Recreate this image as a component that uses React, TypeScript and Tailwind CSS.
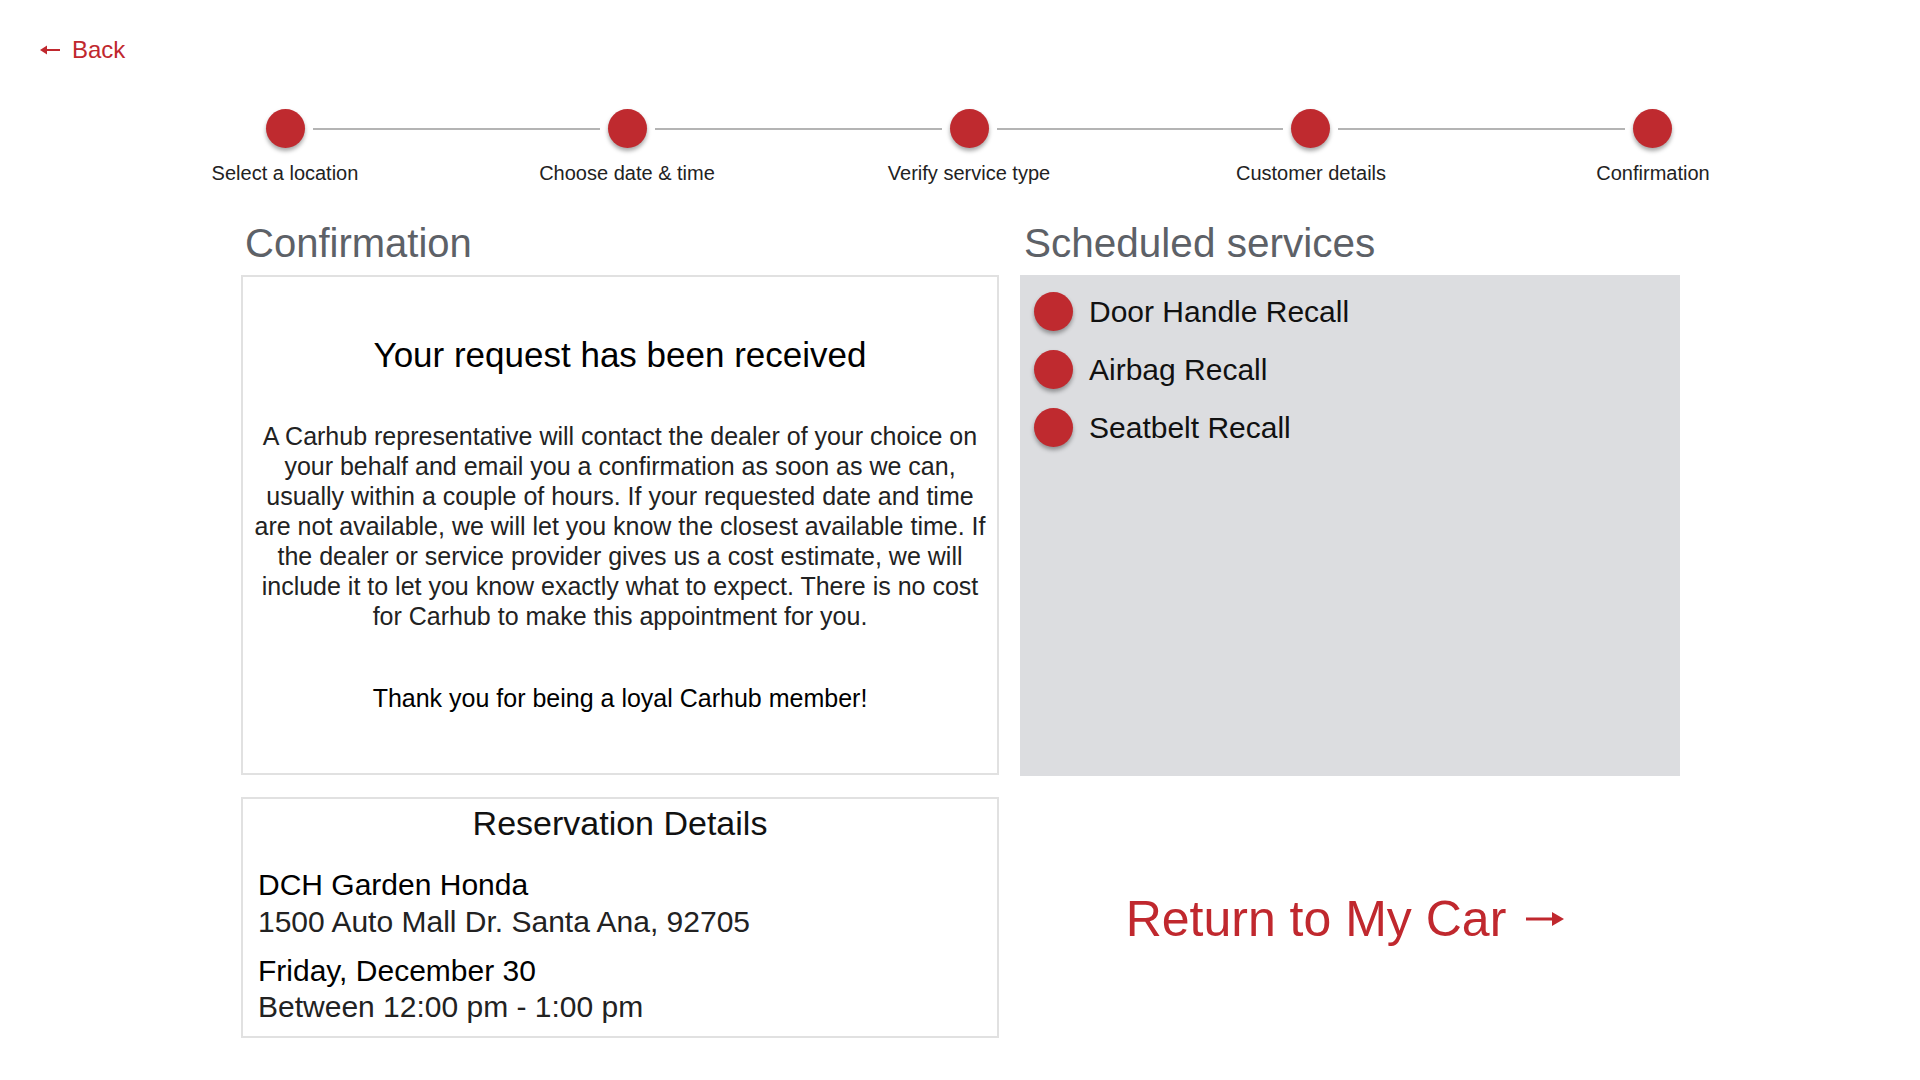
import React from 'react';

const RED = '#c0282e';

const steps = ['Select a location', 'Choose date & time', 'Verify service type', 'Customer details', 'Confirmation'];
const services = ['Door Handle Recall', 'Airbag Recall', 'Seatbelt Recall'];
const message = [
  'A Carhub representative will contact the dealer of your choice on',
  'your behalf and email you a confirmation as soon as we can,',
  'usually within a couple of hours. If your requested date and time',
  'are not available, we will let you know the closest available time. If',
  'the dealer or service provider gives us a cost estimate, we will',
  'include it to let you know exactly what to expect. There is no cost',
  'for Carhub to make this appointment for you.',
];

function Dot() {
  return <span className="block w-[39px] h-[39px] shrink-0 rounded-full bg-[#bf2a2f] shadow-[0_3px_4px_rgba(0,0,0,0.35)]" />;
}

function ArrowLeft() {
  return (
    <svg width="20" height="12" viewBox="0 0 20 12" fill={RED}>
      <polygon points="0,6 7,1.5 7,10.5" />
      <rect x="6" y="5" width="14" height="2" />
    </svg>
  );
}

function ArrowRight() {
  return (
    <svg width="38" height="16" viewBox="0 0 38 16" fill={RED}>
      <rect x="0" y="6.5" width="28" height="3" />
      <polygon points="26,1 38,8 26,15" />
    </svg>
  );
}

export default function App() {
  return (
    <div className="w-[1920px] h-[1080px] bg-white overflow-hidden font-['Liberation_Sans',Arial,sans-serif] text-[#1a1a1a]">
      {/* back link */}
      <div className="mt-[36px] ml-[40px] flex items-center gap-[12px] h-[28px] text-[24px] leading-[28px]" style={{ color: RED }}>
        <ArrowLeft />
        <span>Back</span>
      </div>

      {/* progress */}
      <div className="ml-[114px] w-[1710px] mt-[45px]">
        <div className="flex items-center px-[152px]">
          {steps.map((s, i) => (
            <React.Fragment key={s}>
              {i > 0 && <span className="flex-1 h-[2px] mx-[8px] bg-[#b4b4b4]" />}
              <Dot />
            </React.Fragment>
          ))}
        </div>
        <div className="grid grid-cols-5 mt-[13px] text-[20px] leading-[24px] text-[#222] text-center">
          {steps.map((s) => (
            <div key={s}>{s}</div>
          ))}
        </div>
      </div>

      <div className="flex gap-[21px] ml-[241px] mt-[34px]">
        {/* left column */}
        <div className="w-[758px]">
          <h2 className="pl-[4px] text-[40px] leading-[48px] text-[#5d6167]">Confirmation</h2>
          <div className="mt-[8px] h-[500px] border-2 border-[#e1e1e1] flex flex-col items-center text-center">
            <div className="mt-[58px] text-[35px] leading-[40px] text-black">Your request has been received</div>
            <div className="mt-[46px] text-[25px] leading-[30px] text-[#222]">
              {message.map((l) => (
                <div key={l} className="whitespace-nowrap">{l}</div>
              ))}
            </div>
            <div className="mt-[52px] text-[25px] leading-[30px] text-black">Thank you for being a loyal Carhub member!</div>
          </div>

          <div className="mt-[22px] h-[241px] border-2 border-[#e1e1e1] pl-[15px]">
            <div className="mt-[5px] text-center pr-[15px] text-[34px] leading-[38px] text-[#111]">Reservation Details</div>
            <div className="mt-[25px] text-[30px] leading-[36px]">
              <div className="text-black">DCH Garden Honda</div>
              <div className="mt-[1px] text-[#222]">1500 Auto Mall Dr. Santa Ana, 92705</div>
              <div className="mt-[13px] text-black">Friday, December 30</div>
              <div className="text-[#222]">Between 12:00 pm - 1:00 pm</div>
            </div>
          </div>
        </div>

        {/* right column */}
        <div className="w-[660px]">
          <h2 className="pl-[4px] text-[40.5px] leading-[48px] text-[#5d6167]">Scheduled services</h2>
          <div className="mt-[8px] h-[501px] bg-[#dcdde0] pt-[7px] pl-[14px]">
            {services.map((s) => (
              <div key={s} className="flex items-center gap-[16px] h-[58px] text-[30px] text-[#111]">
                <Dot />
                <span>{s}</span>
              </div>
            ))}
          </div>
          <div className="mt-[113px] pr-[10px] flex items-center justify-center gap-[20px] text-[50px] leading-[60px]" style={{ color: RED }}>
            <span>Return to My Car</span>
            <ArrowRight />
          </div>
        </div>
      </div>
    </div>
  );
}
